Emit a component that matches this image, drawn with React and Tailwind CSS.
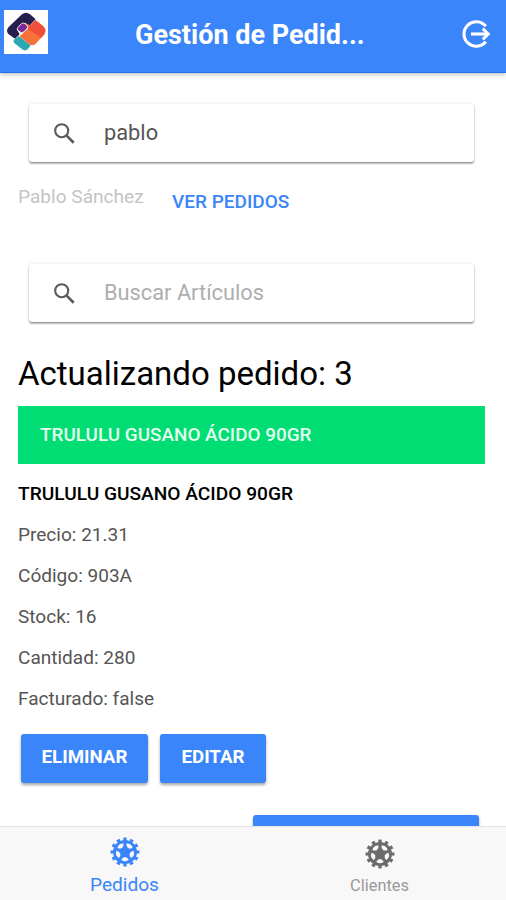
import React, { useState } from 'react';

const details = [
  { label: 'Precio', value: '21.31' },
  { label: 'Código', value: '903A' },
  { label: 'Stock', value: '16' },
  { label: 'Cantidad', value: '280' },
  { label: 'Facturado', value: 'false' },
];

const Logo = () => (
  <svg viewBox="12 28 132 132" className="w-11 h-11 mt-px bg-white">
    <path d="M42 117 L56 106 L92 134 L84 145 Q76 153 66 146 L44 128 Q38 121 42 117Z" fill="#2ba8b4" />
    <path d="M103 56 L129 76 Q141 87 133 101 L107 129 Q98 138 87 130 L58 107 L84 84 L76 66Z" fill="#f8703a" />
    <path d="M103 56 L129 76 Q141 87 133 101 L124 111 L84 84 L88 68Z" fill="#ee4f3c" />
    <path d="M66 41 Q78 32 90 41 L107 56 L90 74 L75 66 L50 86 L59 101 L45 114 L26 101 Q16 91 26 79Z" fill="#241f4d" />
    <path d="M64 69 Q69 65 75 69 L82 76 Q85 80 80 85 L71 94 Q66 98 60 94 L53 88 Q50 84 54 80Z" fill="#7b2a92" stroke="#e9dff0" strokeWidth="3" />
    <path d="M107 56 L90 74M70 96L58 107" stroke="#fff" strokeWidth="1.5" />
  </svg>
);

const LogoutIcon = () => (
  <svg viewBox="0 0 30 28" className="w-[30px] h-7" fill="none" stroke="#fff" strokeWidth="3.1">
    <path d="M24.8 6.2A12.3 12.3 0 1 0 24.8 21.8" />
    <path d="M10 14H26" />
    <path d="M21.8 8.7L27.2 14L21.8 19.3" />
  </svg>
);

const SearchIcon = () => (
  <svg viewBox="0 0 21 21" className="w-[21px] h-[21px]" fill="none" stroke="#5b5b5b">
    <circle cx="7.7" cy="7.7" r="6.5" strokeWidth="2.1" />
    <path d="M12.6 12.6L19.7 19.7" strokeWidth="2.7" />
  </svg>
);

const holes = [0, 72, 144, 216, 288];

const CogIcon = () => (
  <svg viewBox="-15 -15 30 30" className="w-[30px] h-[30px]">
    <circle r="12.6" fill="none" stroke="currentColor" strokeWidth="3.6" pathLength="24" strokeDasharray="1 1" strokeDashoffset="0.5" transform="rotate(-90)" />
    <circle r="12" fill="currentColor" />
    {holes.map(angle => (
      <path key={angle} d="M-3.8 7.7Q-2.2 5 0 5Q2.2 5 3.8 7.7Q0 11 -3.8 7.7Z" fill="#f8f8f8" transform={`rotate(${angle})`} />
    ))}
  </svg>
);

const SearchBox = ({ value, onChange, placeholder }) => (
  <label className="ml-[29px] mr-8 h-[58px] flex items-center bg-white rounded-[3px] pl-[25px] shadow-[0_2px_2px_0_rgba(0,0,0,0.24),0_1px_1px_0_rgba(0,0,0,0.20),0_0_3px_0_rgba(0,0,0,0.14)]">
    <SearchIcon />
    <input
      className="ml-[29px] flex-1 min-w-0 text-[21.8px] text-[#555] placeholder:text-[#aeaeae] outline-none"
      value={value}
      onChange={e => onChange(e.target.value)}
      placeholder={placeholder}
    />
  </label>
);

const Button = ({ className, children }) => (
  <button type="button" className={`h-[49px] rounded-[3px] bg-[#3a85fa] text-white font-bold text-[18.7px] pb-0.5 shadow-[0_2px_3px_rgba(0,0,0,0.35)] ${className}`}>
    {children}
  </button>
);

const App = () => {
  const [cliente, setCliente] = useState('pablo');
  const [articulo, setArticulo] = useState('');

  return (
    <div className="w-full h-[900px] flex flex-col overflow-hidden bg-white font-[Roboto,sans-serif] whitespace-nowrap">
      <header className="h-[73px] shrink-0 flex items-start bg-[#3a85fa] border-b border-[#1f72ec] pl-1 pr-[15px] pt-[9px] shadow-[0_2px_4px_rgba(0,0,0,0.22)]">
        <Logo />
        <h1 className="ml-[87px] mt-[6px] flex-1 text-[27px] leading-[40px] font-bold text-white">Gestión de Pedid...</h1>
        <div className="mt-[11px]">
          <LogoutIcon />
        </div>
      </header>

      <main className="flex-1 min-h-0 overflow-hidden pt-[31px]">
        <SearchBox value={cliente} onChange={setCliente} />
        <div className="flex mt-[23px] pl-[18px]">
          <span className="w-[154px] text-[19.1px] leading-6 text-[#c4c4c4]">Pablo Sánchez</span>
          <button type="button" className="mt-[5px] text-[19px] leading-6 font-medium text-[#3a85fa]">VER PEDIDOS</button>
        </div>
        <div className="mt-[50px]">
          <SearchBox value={articulo} onChange={setArticulo} placeholder="Buscar Artículos" />
        </div>

        <section className="px-[18px]">
          <h2 className="mt-[32px] text-[33px] leading-10 text-black">Actualizando pedido: 3</h2>
          <div className="mt-[12px] mr-[3px] h-[58px] bg-[#00dd72] pl-[22px] text-[18.9px] leading-[57px] font-medium text-[#e4fff0]">
            TRULULU GUSANO ÁCIDO 90GR
          </div>
          <h3 className="mt-[18px] text-[19.15px] leading-6 font-medium text-black">TRULULU GUSANO ÁCIDO 90GR</h3>
          <div className="mt-[17px] flex flex-col gap-[17px]">
            {details.map(d => (
              <p key={d.label} className="text-[19.05px] leading-6 text-[#555]">
                {d.label}: {d.value}
              </p>
            ))}
          </div>
          <div className="flex gap-3 mt-[23px] pl-[3px]">
            <Button className="w-[127px]">ELIMINAR</Button>
            <Button className="w-[106px]">EDITAR</Button>
          </div>
          <div className="flex justify-end mt-8 pr-[9px]">
            <Button className="w-[226px]" />
          </div>
        </section>
      </main>

      <nav className="h-[74px] shrink-0 flex bg-[#f8f8f8] border-t border-[#e4e4e4]">
        <a className="flex-1 flex flex-col items-center pt-[10px] pr-[6px] text-[#3a85fa]">
          <CogIcon />
          <span className="mt-[6px] text-[19.1px] leading-6">Pedidos</span>
        </a>
        <a className="flex-1 flex flex-col items-center pt-[12px] pr-[2px] text-[#6b6b6b]">
          <CogIcon />
          <span className="mt-[5px] text-[16.4px] leading-6 text-[#999]">Clientes</span>
        </a>
      </nav>
    </div>
  );
};

export default App;
